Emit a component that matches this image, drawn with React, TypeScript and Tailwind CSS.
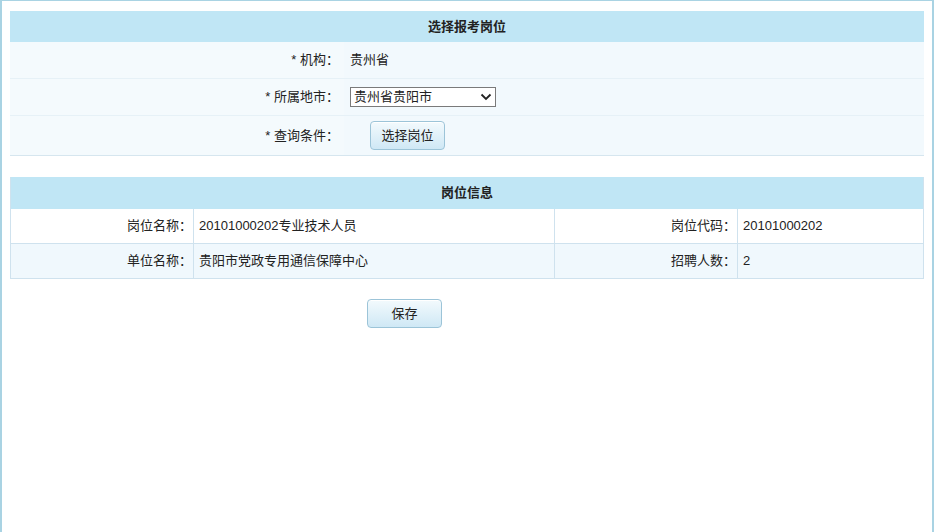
import React from "react";

const FONT = { fontFamily: '"Liberation Sans", "Noto Sans CJK SC", sans-serif' };

function FormRow({ label, children, last }: { label: string; children: React.ReactNode; last?: boolean }) {
    return (
        <div className={"flex bg-[#f2f9fd] " + (last ? "h-[40px] border-b border-[#d6e6ef]" : "h-[37px] border-b border-[#e6f1f7]")}>
            <div className="w-[334px] shrink-0 flex items-center justify-end pr-[5px] bg-[#f4fafd]">{label}</div>
            <div className="flex-1 flex items-center pl-[6px]">{children}</div>
        </div>
    );
}

function InfoRow({ cells, alt }: { cells: string[]; alt?: boolean }) {
    return (
        <div className={"flex h-[35px] border-b border-[#cfe2ee] " + (alt ? "bg-[#f0f8fd]" : "bg-white")}>
            <div className="w-[183px] shrink-0 flex items-center justify-end pr-[1px] border-r border-[#cfe2ee]">{cells[0]}</div>
            <div className="w-[361px] shrink-0 flex items-center pl-[5px] border-r border-[#cfe2ee]">{cells[1]}</div>
            <div className="w-[183px] shrink-0 flex items-center justify-end pr-[1px] border-r border-[#cfe2ee]">{cells[2]}</div>
            <div className="flex-1 flex items-center pl-[5px]">{cells[3]}</div>
        </div>
    );
}

function Button({ children }: { children: React.ReactNode }) {
    return (
        <button className="w-[75px] h-[29px] rounded-[4px] border border-[#9cc4d8] bg-gradient-to-b from-[#f3fafd] to-[#cfe8f5] text-[13px] text-[#222] shadow-[inset_0_1px_0_#fff]">
            {children}
        </button>
    );
}

export default function App() {
    return (
        <div className="w-[935px] h-[532px] bg-white text-[13px] text-[#222]" style={FONT}>
            <div className="h-full w-[934px] border-l-2 border-r-2 border-t border-[#a9d3e3] pt-[10px] pl-[8px] pr-[8px]">
                {/* 选择报考岗位 */}
                <div className="w-[914px]">
                    <div className="h-[31px] bg-[#c0e6f5] flex items-center justify-center font-bold">选择报考岗位</div>
                    <FormRow label="* 机构：">
                        <span>贵州省</span>
                    </FormRow>
                    <FormRow label="* 所属地市：">
                        <div className="w-[146px] h-[20px] border border-[#7a7a7a] bg-white flex items-center justify-between pl-[3px] pr-[3px]">
                            <span>贵州省贵阳市</span>
                            <svg width="12" height="8" viewBox="0 0 12 8">
                                <path d="M1.5 1.5 L6 6 L10.5 1.5" fill="none" stroke="#222" strokeWidth="1.8" />
                            </svg>
                        </div>
                    </FormRow>
                    <FormRow label="* 查询条件：" last>
                        <div className="pl-[20px]">
                            <Button>选择岗位</Button>
                        </div>
                    </FormRow>
                </div>

                {/* 岗位信息 */}
                <div className="w-[914px] mt-[21px] border-l border-r border-[#cfe2ee]">
                    <div className="h-[32px] bg-[#c0e6f5] flex items-center justify-center font-bold">岗位信息</div>
                    <InfoRow cells={["岗位名称：", "20101000202专业技术人员", "岗位代码：", "20101000202"]} />
                    <InfoRow cells={["单位名称：", "贵阳市党政专用通信保障中心", "招聘人数：", "2"]} alt />
                </div>

                <div className="flex pl-[357px] mt-[20px]">
                    <Button>保存</Button>
                </div>
            </div>
        </div>
    );
}
